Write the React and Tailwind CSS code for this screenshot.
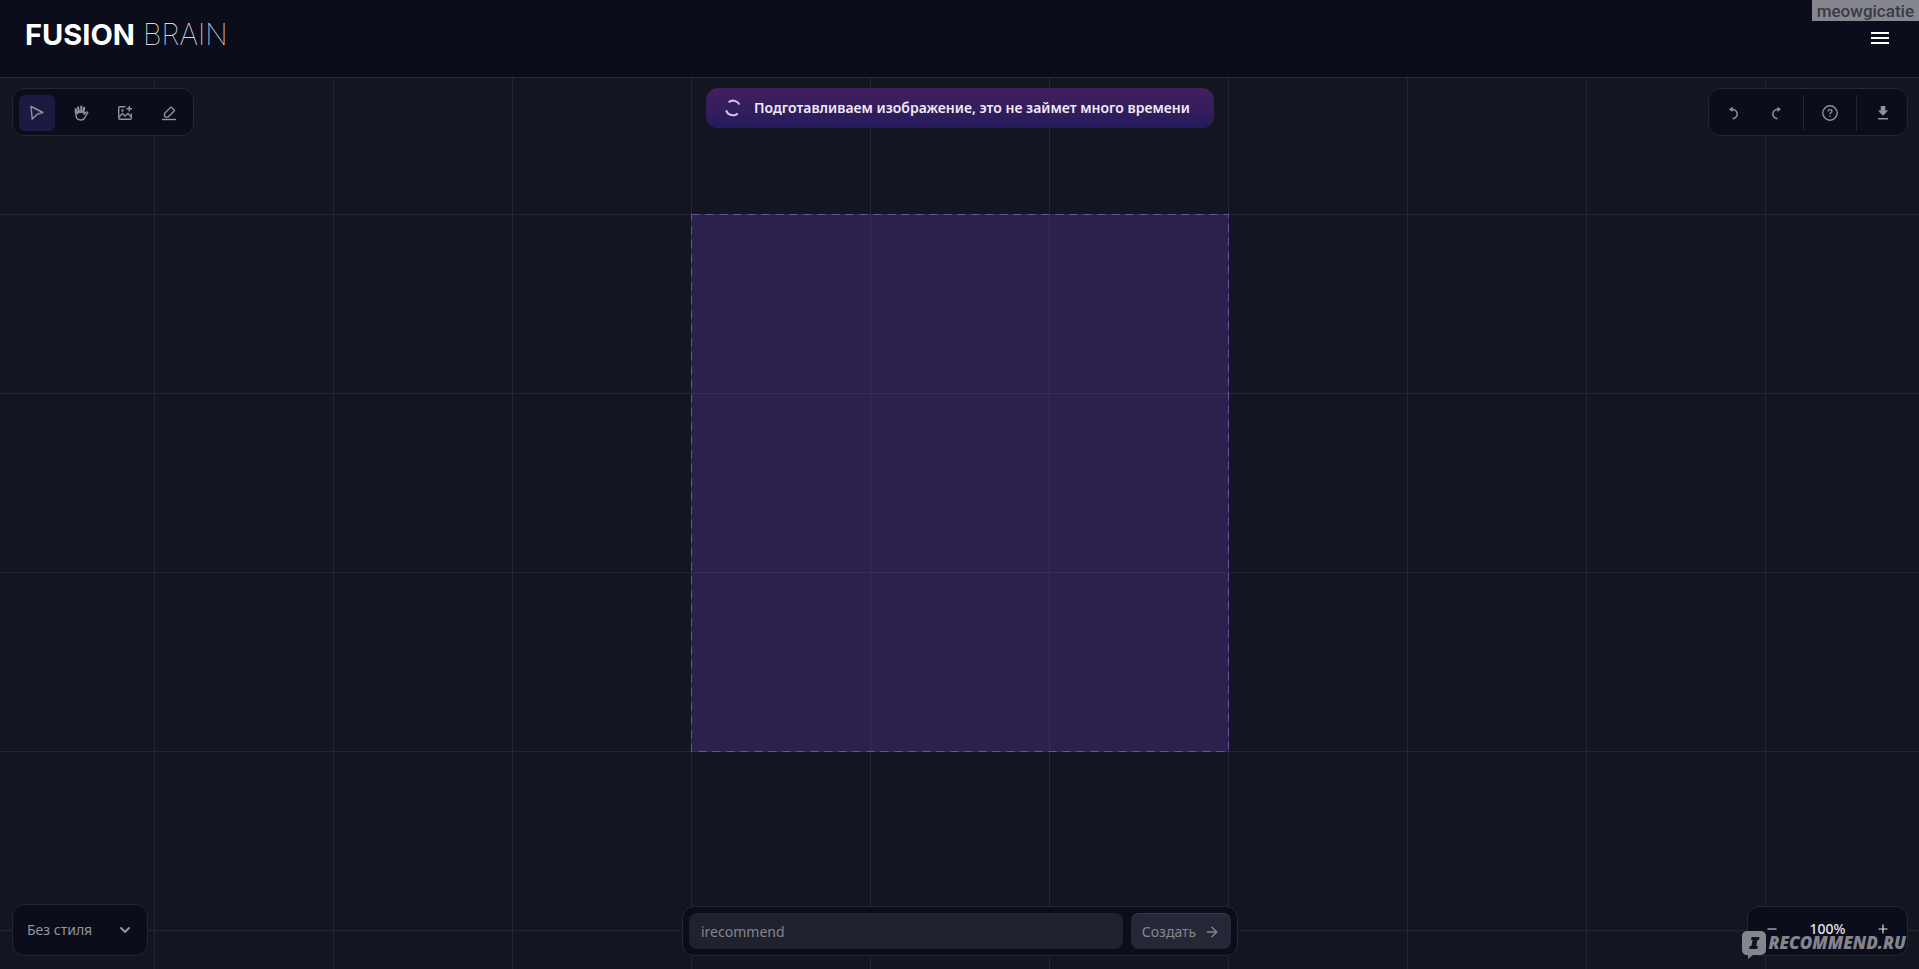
import { ArrowRight, ChevronDown, Minus, Plus } from "lucide-react";

const panel =
  "flex items-center rounded-xl border border-[#262733] bg-[#0b0d1b]";
const tool =
  "flex size-9 items-center justify-center rounded-md text-[#92929a]";

const CursorIcon = () => (
  <svg width="16" height="16" viewBox="0 0 16 16" fill="none" stroke="currentColor" strokeWidth="1.4" strokeLinejoin="round">
    <path d="M2 1.5 14 7.5 8.2 9.2 3.2 14Z" />
  </svg>
);

const HandIcon = () => (
  <svg width="16" height="16" viewBox="0 0 16 16" fill="none" stroke="currentColor" strokeLinecap="round" strokeLinejoin="round">
    <path d="M4.2 8.5 2.6 4.2M6.1 7.2 5 2.4M8.3 7V1.6M10.4 7.4l.8-4.6" strokeWidth="2.1" />
    <path d="M2.2 6.2c.6 2 .8 3.6.9 5 .3 2.3 2 3.8 4.7 3.8 2.2 0 3.5-1 4.2-2.8l2.7-4.2c.3-.8-.7-1.3-1.4-.7l-2 2-.4-2.3H4Z" strokeWidth="1.3" />
  </svg>
);

const ImageAddIcon = () => (
  <svg width="16" height="16" viewBox="0 0 16 16" fill="none" stroke="currentColor" strokeWidth="1.4">
    <path d="M8.5 1.7H2.7a1 1 0 0 0-1 1v10.6a1 1 0 0 0 1 1h10.6a1 1 0 0 0 1-1V8.5" />
    <path d="m2 12 3.5-3.5L8 11l3-2.5 3.2 3.2" />
    <path d="M12.3 1v5.6M9.5 3.8h5.6" />
    <circle cx="5.5" cy="5.5" r=".5" fill="currentColor" />
  </svg>
);

const EraserIcon = () => (
  <svg width="16" height="16" viewBox="0 0 16 16" fill="none" stroke="currentColor" strokeWidth="1.4" strokeLinejoin="round">
    <path d="M3.5 8.5 10 2l3.6 3.6-6.5 6.5H4.5l-1-1Z" />
    <path d="M1 14.5h14" />
  </svg>
);

const UndoIcon = () => (
  <svg width="16" height="16" viewBox="0 0 16 16" fill="none" stroke="currentColor" strokeWidth="1.5">
    <path d="M7.5 13.8c3.2-.8 4.7-2.6 4.7-4.8 0-2.6-2-4.7-5.2-4.7H6" />
    <path d="M7.6 1.7v5.2L4 4.3Z" fill="currentColor" stroke="none" />
  </svg>
);

const HelpIcon = () => (
  <svg width="16" height="16" viewBox="0 0 16 16" fill="none" stroke="currentColor" strokeWidth="1.4">
    <circle cx="8" cy="8" r="7.2" />
    <path d="M6.1 6.4C6.2 5.2 7 4.6 8 4.6s1.9.7 1.9 1.7C9.9 7.5 8 7.6 8 9.3" />
    <path d="M8 10.4v1.4" />
  </svg>
);

const DownloadIcon = () => (
  <svg width="16" height="16" viewBox="0 0 16 16" fill="currentColor">
    <path d="M5.7 1h4.6v4.6h2.9L8 10.8 2.8 5.6h2.9Z" />
    <path d="M3 13h10v1.5H3Z" />
  </svg>
);

const SpinnerIcon = () => (
  <svg width="18" height="18" viewBox="0 0 18 18" fill="none" stroke="#d3c4e4" strokeWidth="2">
    <path d="M4.6 3.2A7.2 7.2 0 0 1 15.4 5.4" />
    <path d="M2.1 11.4a7.2 7.2 0 0 0 11.7 3" />
  </svg>
);

const Header = () => (
  <header className="flex h-[78px] items-start justify-between border-b border-[#292a36] bg-[#0b0d1b]">
    <a href="/" className="ml-[25px] mt-[17px] font-['Inter'] text-[29px] leading-9 text-white">
      <span className="font-bold">FUSION</span>{" "}
      <span className="font-thin">BRAIN</span>
    </a>
    <div className="flex flex-col items-end">
      <span className="h-[21px] bg-[#86868e] px-[5px] font-['Roboto'] text-[17px] leading-[23px] font-medium text-[#393a44]">
        meowgicatie
      </span>
      <button type="button" aria-label="Меню" className="mt-[11px] mr-[30px] flex flex-col gap-[3px]">
        <span className="h-0.5 w-[18px] bg-white" />
        <span className="h-0.5 w-[18px] bg-white" />
        <span className="h-0.5 w-[18px] bg-white" />
      </button>
    </div>
  </header>
);

const Toolbar = () => (
  <div className={`${panel} gap-2 px-1.5 pt-1.5 pb-1`}>
    <button type="button" aria-label="Выбор" className={`${tool} bg-[#1b1a42]`}>
      <CursorIcon />
    </button>
    <button type="button" aria-label="Перемещение" className={tool}>
      <HandIcon />
    </button>
    <button type="button" aria-label="Добавить изображение" className={tool}>
      <ImageAddIcon />
    </button>
    <button type="button" aria-label="Ластик" className={tool}>
      <EraserIcon />
    </button>
  </div>
);

const Status = () => (
  <div
    role="status"
    className="flex h-10 w-[508px] items-center gap-3 rounded-xl bg-linear-to-b from-[#431f5e] to-[#251a5c] pl-[18px] text-sm font-semibold whitespace-nowrap text-[#f1eaf6]"
  >
    <SpinnerIcon />
    Подготавливаем изображение, это не займет много времени
  </div>
);

const Actions = () => (
  <div className={`${panel} px-1.5 pt-1.5 pb-1`}>
    <button type="button" aria-label="Отменить" className={tool}>
      <UndoIcon />
    </button>
    <button type="button" aria-label="Повторить" className={`${tool} mx-2 -scale-x-100`}>
      <UndoIcon />
    </button>
    <div className="flex border-x border-[#262733] px-2">
      <button type="button" aria-label="Помощь" className={tool}>
        <HelpIcon />
      </button>
    </div>
    <button type="button" aria-label="Скачать" className={`${tool} ml-2`}>
      <DownloadIcon />
    </button>
  </div>
);

const Artboard = () => (
  <svg className="mx-auto size-[538px]" viewBox="0 0 538 538" fill="none">
    <rect width="538" height="538" fill="#553394" fillOpacity=".39" />
    <rect x=".5" y=".5" width="537" height="537" stroke="#6d4fa8" strokeDasharray="8 6" />
  </svg>
);

const Prompt = () => (
  <form className={`${panel} w-[556px] gap-2 p-1.5`} onSubmit={(e) => e.preventDefault()}>
    <input
      type="text"
      aria-label="Запрос"
      defaultValue="irecommend"
      className="h-9 min-w-0 flex-1 rounded-lg bg-[#20212e] px-3 text-sm text-[#85858d] outline-none"
    />
    <button
      type="submit"
      className="flex h-9 w-[100px] items-center justify-center gap-2 rounded-lg border-t border-[#3a3b49] bg-[#262837] text-sm text-[#85858d]"
    >
      Создать
      <ArrowRight size={16} strokeWidth={2} />
    </button>
  </form>
);

const Watermark = () => (
  <div className="pointer-events-none absolute right-px -bottom-1 flex items-start gap-0.5 text-[#85858e]">
    <svg width="24" height="28" viewBox="0 0 24 28" fill="currentColor">
      <path d="M5 0h14a5 5 0 0 1 5 5v14a5 5 0 0 1-5 5h-8l-5 4v-4a5 5 0 0 1-6-5V5a5 5 0 0 1 5-5Z" />
      <path d="M9.5 6h8L17 9h-1.6l-1.2 6h1.6l-.5 3h-8l.5-3h1.6l1.2-6H9Z" fill="#11131f" />
    </svg>
    <span className="mt-1 font-['Open_Sans'] text-[17px] leading-4 font-extrabold italic">RECOMMEND.RU</span>
  </div>
);

const App = () => {
  return (
    <div className="flex min-h-screen flex-col bg-[#131520] font-['Noto_Sans',sans-serif]">
      <Header />
      <main className="flex flex-1 flex-col bg-[linear-gradient(to_right,#252631_1px,transparent_1px),linear-gradient(to_bottom,#252631_1px,transparent_1px)] bg-[size:179px_179px] bg-[position:center_136px] pt-2.5 pr-[11px] pb-[13px] pl-3">
        <div className="grid grid-cols-[1fr_auto_1fr] items-start">
          <div className="flex">
            <Toolbar />
          </div>
          <Status />
          <div className="flex justify-end">
            <Actions />
          </div>
        </div>

        <div className="mt-[78px] mb-6">
          <Artboard />
        </div>

        <div className="mt-auto grid grid-cols-[1fr_auto_1fr] items-end">
          <div className="flex">
            <div className={`${panel} relative text-[#92929a]`}>
              <select
                aria-label="Стиль"
                className="h-[50px] w-[134px] appearance-none rounded-xl bg-transparent pl-3.5 text-sm outline-none"
              >
                <option>Без стиля</option>
              </select>
              <ChevronDown size={16} strokeWidth={3} className="pointer-events-none absolute right-3.5" />
            </div>
          </div>
          <Prompt />
          <div className="flex justify-end">
            <div className={`${panel} relative h-[50px] w-[161px] justify-between px-1.5 pb-1 text-sm leading-4 font-medium text-[#e2e2e8]`}>
              <button type="button" aria-label="Уменьшить" className="flex size-9 items-center justify-center">
                <Minus size={14} />
              </button>
              100%
              <button type="button" aria-label="Увеличить" className="flex size-9 items-center justify-center">
                <Plus size={14} />
              </button>
              <Watermark />
            </div>
          </div>
        </div>
      </main>
    </div>
  );
};

export default App;
